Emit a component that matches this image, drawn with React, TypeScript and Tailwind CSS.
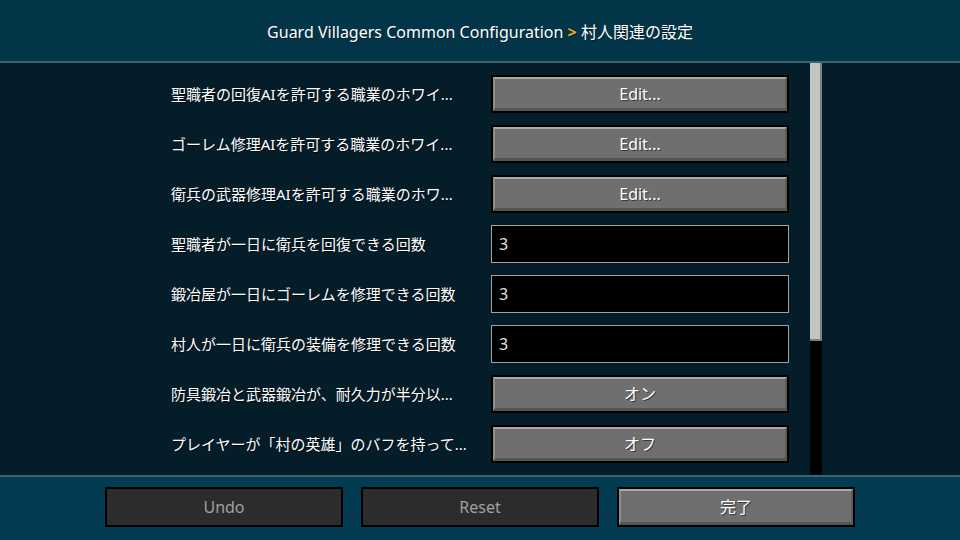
import React from "react";

type Row =
  | { label: string; kind: "button"; value: string }
  | { label: string; kind: "input"; value: string };

const rows: Row[] = [
  { label: "聖職者の回復AIを許可する職業のホワイ...", kind: "button", value: "Edit..." },
  { label: "ゴーレム修理AIを許可する職業のホワイ...", kind: "button", value: "Edit..." },
  { label: "衛兵の武器修理AIを許可する職業のホワ...", kind: "button", value: "Edit..." },
  { label: "聖職者が一日に衛兵を回復できる回数", kind: "input", value: "3" },
  { label: "鍛冶屋が一日にゴーレムを修理できる回数", kind: "input", value: "3" },
  { label: "村人が一日に衛兵の装備を修理できる回数", kind: "input", value: "3" },
  { label: "防具鍛冶と武器鍛冶が、耐久力が半分以...", kind: "button", value: "オン" },
  { label: "プレイヤーが「村の英雄」のバフを持って...", kind: "button", value: "オフ" },
];

const font = "font-['Noto_Sans','Noto_Sans_CJK_JP',sans-serif]";

const McButton: React.FC<{ text: string; disabled?: boolean; className?: string }> = ({
  text,
  disabled,
  className,
}) => {
  if (disabled) {
    return (
      <div className={`border-2 border-black bg-[#2c2c2c] flex items-center justify-center ${className}`}>
        <span className="text-[16px] text-[#a0a0a0]">{text}</span>
      </div>
    );
  }
  return (
    <div className={`border-2 border-black bg-black ${className}`}>
      <div className="h-full bg-[#6f6f6f] border-t-2 border-l-2 border-t-[#a9a9a9] border-l-[#8e8e8e] border-b-[3px] border-r-2 border-b-[#555555] border-r-[#5c5c5c] flex items-center justify-center">
        <span className="text-[16px] text-white [text-shadow:1px_1px_0_#3a3a3a]">{text}</span>
      </div>
    </div>
  );
};

const App: React.FC = () => {
  return (
    <div className={`w-[960px] h-[540px] flex flex-col overflow-hidden ${font}`}>
      {/* header */}
      <div className="h-[61px] bg-[#033549] flex items-center justify-center pt-[2px]">
        <span className="text-[16px] text-white [text-shadow:1px_1px_0_rgba(0,0,0,0.4)]">
          Guard Villagers Common Configuration{" "}
          <span className="text-[#f5a623] font-bold">&gt;</span> 村人関連の設定
        </span>
      </div>
      <div className="h-[2px] bg-[#3a6273]" />

      {/* list */}
      <div className="flex-1 bg-[#051c29] grid grid-cols-[1fr_618px_1fr]">
        <div />
        <div className="flex flex-col gap-3 pt-3">
          {rows.map((r, i) => (
            <div key={i} className="flex items-center h-[38px]">
              <div className="w-[320px] text-[15px] text-white whitespace-nowrap [text-shadow:1px_1px_0_rgba(0,0,0,0.6)]">
                {r.label}
              </div>
              {r.kind === "button" ? (
                <McButton text={r.value} className="w-[298px] h-[38px]" />
              ) : (
                <div className="w-[298px] h-[38px] bg-black border border-[#a0a0a0] flex items-center pl-[7px]">
                  <span className="text-[16px] text-[#e0e0e0]">{r.value}</span>
                </div>
              )}
            </div>
          ))}
        </div>
        <div className="pl-[21px]">
          <div className="w-[12px] h-full bg-black flex flex-col">
            <div className="h-[278px] bg-[#c4c4c4] border-r-2 border-b-2 border-[#808080]" />
          </div>
        </div>
      </div>

      {/* footer */}
      <div className="h-[2px] bg-[#3a6273]" />
      <div className="h-[63px] bg-[#033c52] flex justify-center gap-[18px] pt-[10px]">
        <McButton text="Undo" disabled className="w-[238px] h-[40px]" />
        <McButton text="Reset" disabled className="w-[238px] h-[40px]" />
        <McButton text="完了" className="w-[238px] h-[40px]" />
      </div>
    </div>
  );
};

export default App;
